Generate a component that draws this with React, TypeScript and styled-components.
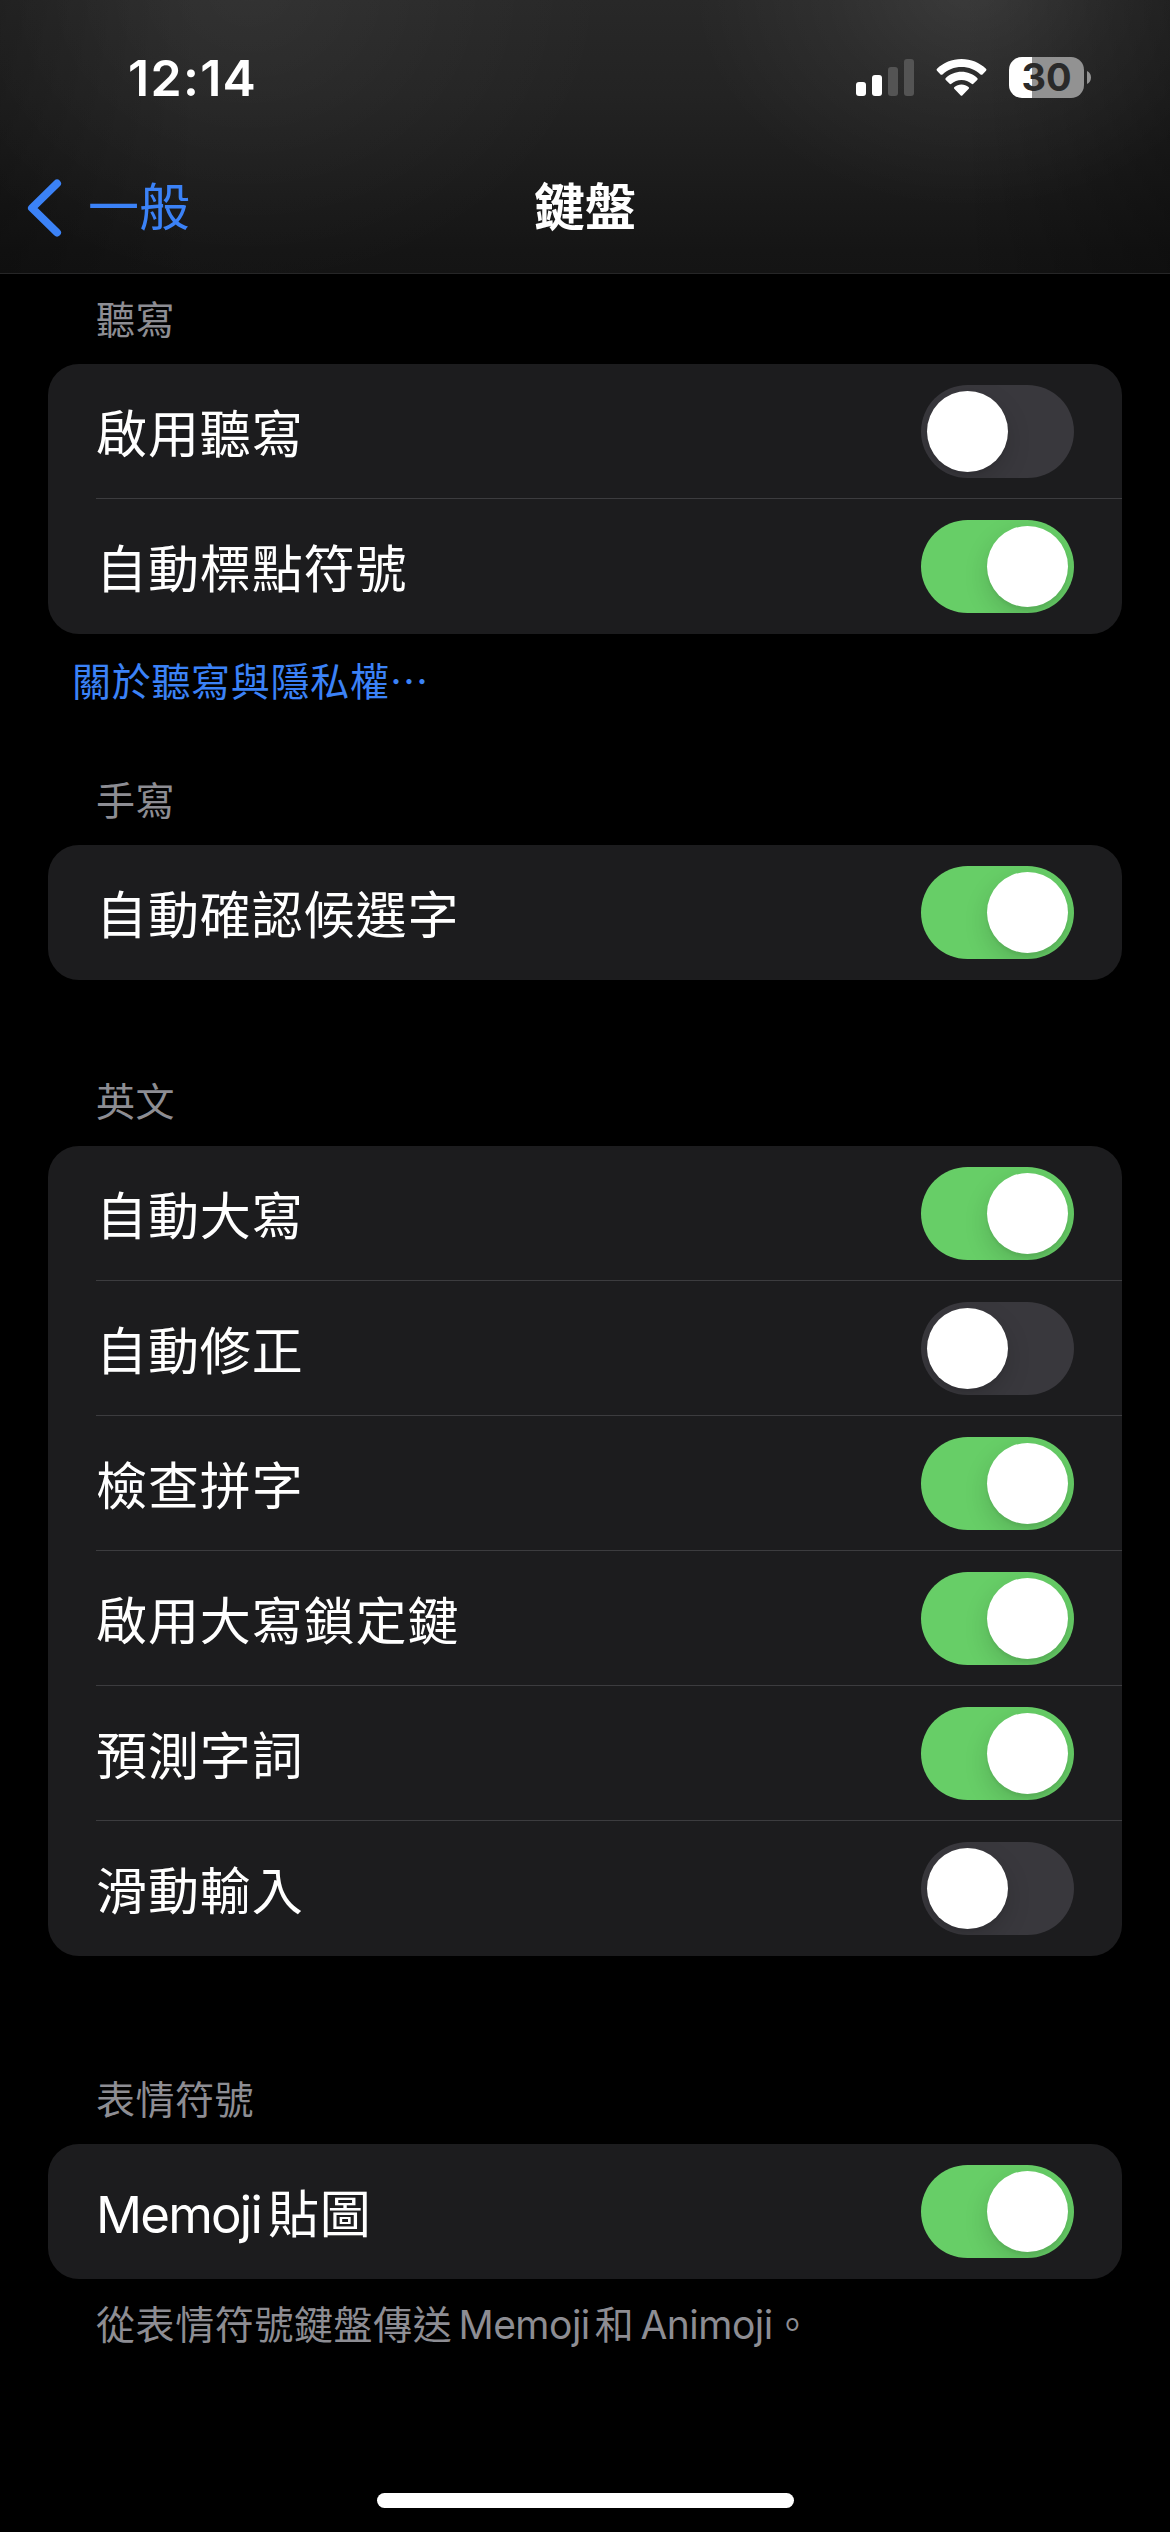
import React, { useState } from "react";
import styled, { createGlobalStyle } from "styled-components";

const GlobalStyle = createGlobalStyle`
  * { box-sizing: border-box; }
  html, body { margin: 0; padding: 0; background: #000; }
  body {
    font-family: Inter, "Noto Sans CJK TC", sans-serif;
    color: #fff;
    text-autospace: no-autospace;
  }
  button { border: 0; padding: 0; background: none; font: inherit; color: inherit; }
`;

const Screen = styled.div`
  position: relative;
  display: flex;
  flex-direction: column;
  width: 1170px;
  height: 2532px;
  overflow: hidden;
  background: #000;
`;

const Header = styled.header`
  display: flex;
  flex-direction: column;
  height: 274px;
  border-bottom: 1px solid #262627;
  background:
    radial-gradient(ellipse 280px 220px at 970px -10px, rgba(255, 255, 255, 0.085), rgba(255, 255, 255, 0.035) 50%, transparent),
    radial-gradient(ellipse 360px 300px at 250px -10px, rgba(255, 255, 255, 0.05), rgba(255, 255, 255, 0.02) 55%, transparent),
    linear-gradient(90deg, rgba(0, 0, 0, 0.25), transparent 200px, transparent 960px, rgba(0, 0, 0, 0.28)),
    linear-gradient(180deg, #282828, #232323 35%, #151515 92%, #141414);
`;

const StatusBar = styled.div`
  display: flex;
  justify-content: space-between;
  align-items: center;
  height: 141px;
  padding: 14px 79px 0 128px;
`;

const Clock = styled.time`
  font-size: 50px;
  line-height: 60px;
  font-weight: 600;
  letter-spacing: 1.3px;
`;

const StatusIcons = styled.div`
  display: flex;
  align-items: center;
  gap: 22px;
`;

const Battery = styled.div`
  display: flex;
  align-items: center;
  gap: 3px;
`;

const BatteryBody = styled.div`
  display: flex;
  align-items: center;
  justify-content: center;
  width: 75px;
  height: 41px;
  border-radius: 13px;
  background: linear-gradient(90deg, #fff 23px, #929292 23px);
  color: #2a2a2a;
  font-size: 38px;
  line-height: 41px;
  font-weight: 700;
`;

const NavBar = styled.nav`
  display: grid;
  grid-template-columns: 1fr auto 1fr;
  align-items: center;
  height: 132px;
  padding: 1px 26px 0;
`;

const BackButton = styled.button`
  display: flex;
  align-items: center;
  gap: 24px;
  color: #3b82f7;
  font-size: 51px;
  line-height: 74px;
`;

const Title = styled.h1`
  margin: 0;
  font-size: 51px;
  line-height: 74px;
  font-weight: 700;
`;

const Content = styled.main`
  display: flex;
  flex-direction: column;
  padding: 2px 48px 0;
`;

const Section = styled.section<{ $gap: number }>`
  display: flex;
  flex-direction: column;
  margin-bottom: ${(p) => p.$gap}px;
`;

const Caption = styled.h2`
  margin: 0;
  padding-left: 48px;
  height: 88px;
  font-size: 39px;
  line-height: 88px;
  font-weight: 400;
  letter-spacing: 0.5px;
  color: #8d8d93;
`;

const Card = styled.div`
  display: flex;
  flex-direction: column;
  border-radius: 31px;
  background: #1c1c1e;
  padding-left: 48px;
`;

const Row = styled.div`
  display: flex;
  align-items: center;
  justify-content: space-between;
  height: 135px;
  padding-right: 48px;
  border-bottom: 1px solid #3c3c3f;
  &:last-child { border-bottom-color: transparent; }
`;

const RowLabel = styled.span`
  padding-top: 8px;
  font-size: 51px;
  line-height: 74px;
  letter-spacing: 0.9px;
`;

const Latin = styled.span<{ $lead?: number; $trail?: number; $track: number }>`
  letter-spacing: ${(p) => p.$track}px;
  margin-left: ${(p) => p.$lead ?? 0}px;
  margin-right: ${(p) => p.$trail ?? 0}px;
`;

const Switch = styled.button<{ $on: boolean }>`
  display: flex;
  align-items: center;
  justify-content: ${(p) => (p.$on ? "flex-end" : "flex-start")};
  width: 153px;
  height: 93px;
  padding: 6px;
  border-radius: 47px;
  overflow: hidden;
  background: ${(p) => (p.$on ? "#67ce67" : "#39383d")};
`;

const Knob = styled.span`
  width: 81px;
  height: 81px;
  border-radius: 50%;
  background: #fff;
  box-shadow: 0 9px 24px rgba(0, 0, 0, 0.15), 0 3px 3px rgba(0, 0, 0, 0.05);
`;

const FooterLink = styled.a`
  height: 96px;
  padding-left: 24px;
  font-size: 39px;
  line-height: 96px;
  letter-spacing: 0.7px;
  color: #3b82f7;
`;

const FooterNote = styled.p`
  margin: 0;
  height: 92px;
  padding-left: 48px;
  font-size: 39px;
  line-height: 92px;
  letter-spacing: 0.6px;
  color: #8d8d93;
`;

const HomeIndicator = styled.div`
  position: absolute;
  left: 377px;
  bottom: 24px;
  width: 417px;
  height: 15px;
  border-radius: 8px;
  background: #fff;
`;

function Signal() {
  return (
    <svg width="58" height="37" viewBox="0 0 58 37" fill="#fff">
      <rect x="0" y="23" width="10" height="14" rx="3" />
      <rect x="16" y="16" width="10" height="21" rx="3" />
      <rect x="32" y="8" width="10" height="29" rx="3" fill="#545454" />
      <rect x="48" y="0" width="10" height="37" rx="3" fill="#545454" />
    </svg>
  );
}

function Wifi() {
  return (
    <svg width="51" height="37" viewBox="0 0 51 37" fill="#fff">
      <path d="M25.5 0C35 0 43.600 3.700 50 9.700Q51 10.700 50 11.700L46.500 15.400Q45.500 16.300 44.500 15.400C39.400 10.800 32.800 8.100 25.500 8.100S11.600 10.800 6.500 15.400Q5.500 16.300 4.500 15.400L1 11.700Q0 10.700 1 9.700C7.400 3.700 16 0 25.500 0Z" />
      <path d="M25.500 12.800C31.500 12.800 37 15.100 41.200 18.900Q42.300 19.900 41.200 21L37.600 24.600Q36.600 25.600 35.600 24.700C32.900 22.300 29.400 20.900 25.500 20.900S18.100 22.300 15.400 24.700Q14.400 25.600 13.400 24.600L9.800 21Q8.700 19.900 9.800 18.900C14 15.100 19.500 12.800 25.500 12.800Z" />
      <path d="M25.500 25.500C28.200 25.500 30.600 26.400 32.500 28Q33.600 29 32.500 30.100L26.500 36.200Q25.500 37.200 24.500 36.200L18.500 30.100Q17.400 29 18.500 28C20.400 26.400 22.800 25.500 25.500 25.500Z" />
    </svg>
  );
}

function BatteryCap() {
  return (
    <svg width="4" height="13" viewBox="0 0 4 13">
      <path d="M0 0C2.400 1 4 3.500 4 6.500S2.400 12 0 13Z" fill="#929292" />
    </svg>
  );
}

function Chevron() {
  return (
    <svg width="38" height="60" viewBox="0 0 38 60" fill="none">
      <path d="M31 5.500 6 30 31 54.500" stroke="#3b82f7" strokeWidth="8" strokeLinecap="round" strokeLinejoin="round" />
    </svg>
  );
}

type Item = { label: React.ReactNode; on: boolean };

function ToggleRow({ item }: { item: Item }) {
  const [on, setOn] = useState(item.on);
  return (
    <Row>
      <RowLabel>{item.label}</RowLabel>
      <Switch $on={on} role="switch" aria-checked={on} onClick={() => setOn(!on)}>
        <Knob />
      </Switch>
    </Row>
  );
}

function Group({ title, items, gap, children }: { title: string; items: Item[]; gap: number; children?: React.ReactNode }) {
  return (
    <Section $gap={gap}>
      <Caption>{title}</Caption>
      <Card>
        {items.map((item, i) => (
          <ToggleRow key={i} item={item} />
        ))}
      </Card>
      {children}
    </Section>
  );
}

const dictation: Item[] = [
  { label: "啟用聽寫", on: false },
  { label: "自動標點符號", on: true },
];

const handwriting: Item[] = [{ label: "自動確認候選字", on: true }];

const english: Item[] = [
  { label: "自動大寫", on: true },
  { label: "自動修正", on: false },
  { label: "檢查拼字", on: true },
  { label: "啟用大寫鎖定鍵", on: true },
  { label: "預測字詞", on: true },
  { label: "滑動輸入", on: false },
];

const emoji: Item[] = [
  { label: <><Latin $track={-1.8} $trail={7}>Memoji</Latin>貼圖</>, on: true },
];

export default function App() {
  return (
    <Screen lang="zh-Hant-TW">
      <GlobalStyle />
      <Header>
        <StatusBar>
          <Clock>12:14</Clock>
          <StatusIcons>
            <Signal />
            <Wifi />
            <Battery>
              <BatteryBody>30</BatteryBody>
              <BatteryCap />
            </Battery>
          </StatusIcons>
        </StatusBar>
        <NavBar>
          <BackButton>
            <Chevron />
            一般
          </BackButton>
          <Title>鍵盤</Title>
        </NavBar>
      </Header>
      <Content>
        <Group title="聽寫" items={dictation} gap={27}>
          <FooterLink>關於聽寫與隱私權⋯</FooterLink>
        </Group>
        <Group title="手寫" items={handwriting} gap={78} />
        <Group title="英文" items={english} gap={100} />
        <Group title="表情符號" items={emoji} gap={0}>
          <FooterNote>
            從表情符號鍵盤傳送<Latin $track={-0.5} $lead={6} $trail={5}>Memoji</Latin>和
            <Latin $track={-0.5} $lead={6}>Animoji</Latin>。
          </FooterNote>
        </Group>
      </Content>
      <HomeIndicator />
    </Screen>
  );
}
